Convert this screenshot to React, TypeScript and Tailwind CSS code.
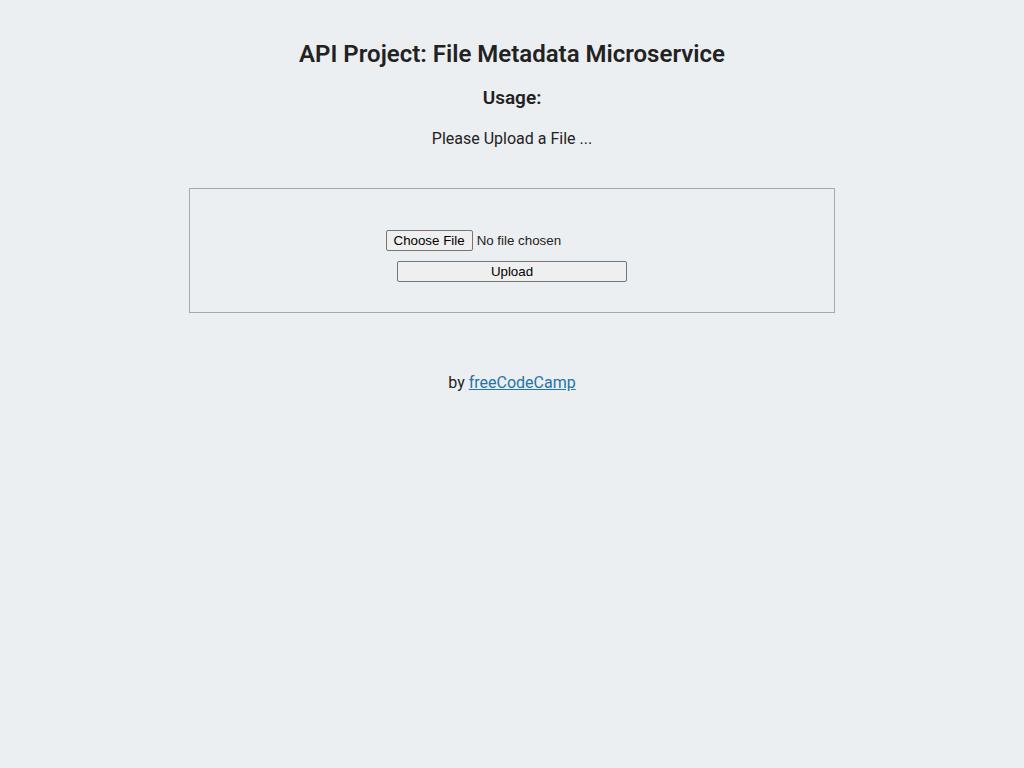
import React from "react";

export default function App() {
  return (
    <div className="min-h-screen bg-[#eceff1] text-[#222] font-['Roboto',sans-serif]">
      <div className="flex flex-col items-center pt-[39px]">
        <h2 className="text-[24px] leading-[30px] font-semibold">API Project: File Metadata Microservice</h2>
        <h3 className="mt-[17px] text-[19px] leading-[24px] font-semibold">Usage:</h3>
        <p className="mt-[19px] text-[16px] leading-[20px]">Please Upload a File ...</p>

        <form
          className="mt-[39px] flex h-[125px] w-[646px] flex-col items-center border border-[#a9a9a9] pt-[41px]"
          onSubmit={(e) => e.preventDefault()}
        >
          <input
            type="file"
            name="upfile"
            className="block h-[21px] text-[13.33px] leading-[19px] text-[#222] font-['Liberation_Sans',Arial,sans-serif] file:mr-[4px] file:h-[21px] file:rounded-[2px] file:border file:border-solid file:border-[#767676] file:bg-[#efefef] file:px-[7px] file:text-[13.33px] file:text-black file:font-['Liberation_Sans',Arial,sans-serif]"
          />
          <button
            type="submit"
            className="mt-[10px] block h-[21px] w-[230px] rounded-[2px] border border-[#767676] bg-[#efefef] text-[13.33px] leading-[19px] text-black font-['Liberation_Sans',Arial,sans-serif]"
          >
            Upload
          </button>
        </form>

        <p className="mt-[60px] text-[16px] leading-[20px]">
          by{" "}
          <a href="#" className="text-[#2574a9] underline">
            freeCodeCamp
          </a>
        </p>
      </div>
    </div>
  );
}
